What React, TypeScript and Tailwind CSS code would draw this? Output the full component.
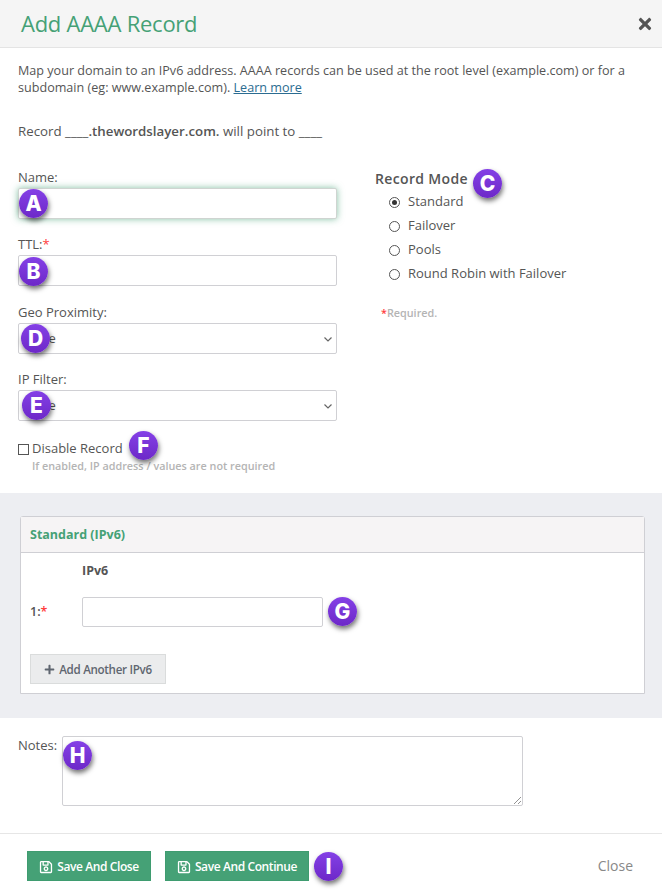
import { FaPlus, FaRegSave, FaTimes } from "react-icons/fa";

function Badge({ letter, className }: { letter: string; className: string }) {
  return (
    <span
      className={`absolute flex h-[29px] w-[29px] items-center justify-center rounded-full bg-gradient-to-b from-[#8440e6] to-[#6d28c8] text-[21px] font-extrabold leading-none text-white shadow-[1px_3px_5px_rgba(0,0,0,0.55)] [font-family:Inter,sans-serif] ${className}`}
    >
      {letter}
    </span>
  );
}

function Req() {
  return <span className="text-[#ff3b3b]">*</span>;
}

function Select() {
  return (
    <div className="relative h-[31px] w-[319px] rounded-[2px] border border-[#d0d0d4] bg-white">
      <span className="absolute left-[4px] top-[5px] text-[13px] text-[#555]">None</span>
      <svg className="absolute right-[3px] top-[11px]" width="10" height="8" viewBox="0 0 10 8" fill="none">
        <path d="M1.5 2.5L5 6l3.5-3.5" stroke="#666" strokeWidth="1.2" />
      </svg>
    </div>
  );
}

function Radio({ label, checked }: { label: string; checked?: boolean }) {
  return (
    <div className="flex h-[24px] items-center pl-[14px]">
      <span className="flex h-[11px] w-[11px] items-center justify-center rounded-full border border-[#555] bg-white">
        {checked && <span className="h-[5px] w-[5px] rounded-full bg-[#333]" />}
      </span>
      <span className="ml-[8px] text-[13px] text-[#555]">{label}</span>
    </div>
  );
}

function SaveButton({ label, width }: { label: string; width: string }) {
  return (
    <button className={`flex h-[30px] items-center justify-center gap-[4px] border border-[#3f9c70] bg-[#45a176] pt-[1px] text-[12px] font-semibold tracking-[-0.4px] text-white ${width}`}>
      <FaRegSave className="text-[14px]" />
      {label}
    </button>
  );
}

export default function App() {
  return (
    <div className="relative h-[896px] w-[662px] overflow-hidden bg-white text-[#555] [font-family:'Open_Sans',sans-serif]">
      <header className="flex h-[48px] items-center justify-between border-b border-[#e4e4e4] bg-[#f5f5f5] pl-[21px] pr-[8px]">
        <h1 className="text-[22px] tracking-[-0.25px] text-[#45a176]">Add AAAA Record</h1>
        <FaTimes className="text-[18px] text-[#555]" />
      </header>

      <section className="h-[445px] px-[18px] pt-[14px]">
        <p className="text-[12.6px] leading-[17px]">
          Map your domain to an IPv6 address. AAAA records can be used at the root level (example.com) or for a
          subdomain (eg: www.example.com).{" "}
          <a className="text-[#2b6c91] underline">Learn more</a>
        </p>
        <p className="mt-[26px] text-[13.3px] leading-[18px]">
          Record ____<b className="font-semibold">.thewordslayer.com.</b> will point to ____
        </p>

        <div className="mt-[28px] flex">
          <div className="w-[357px]">
            <label className="block h-[20px] text-[13px] leading-[18px]">Name:</label>
            <div className="relative h-[31px] w-[319px] rounded-[2px] border border-[#cfd4d1] bg-white shadow-[0_0_7px_rgba(69,161,118,0.65)]">
              <Badge letter="A" className="left-[0px] top-[0px]" />
            </div>
            <label className="mt-[16px] block h-[20px] text-[13px] leading-[19px]">
              TTL:<Req />
            </label>
            <div className="relative h-[31px] w-[319px] rounded-[2px] border border-[#d0d0d4] bg-white">
              <Badge letter="B" className="left-[0px] top-[1px]" />
            </div>
            <label className="mt-[17px] block h-[20px] text-[13px] leading-[18px]">Geo Proximity:</label>
            <div className="relative">
              <Select />
              <Badge letter="D" className="left-[3px] top-[1px]" />
            </div>
            <label className="mt-[16px] block h-[20px] text-[13px] leading-[18px]">IP Filter:</label>
            <div className="relative">
              <Select />
              <Badge letter="E" className="left-[4px] top-[1px]" />
            </div>
            <div className="relative mt-[19px] flex h-[18px] items-center">
              <span className="h-[11px] w-[11px] border border-[#555] bg-white" />
              <span className="ml-[3px] text-[13px]">Disable Record</span>
              <Badge letter="F" className="left-[111px] top-[-9px]" />
            </div>
            <p className="ml-[14px] text-[10.8px] font-semibold text-[#b4b4b4]">
              If enabled, IP address / values are not required
            </p>
          </div>

          <div className="relative mt-[1px]">
            <h2 className="h-[20px] text-[14px] font-semibold leading-[20px] tracking-[0.35px]">Record Mode</h2>
            <Badge letter="C" className="left-[98px] top-[0px]" />
            <div className="mt-[1px]">
              <Radio label="Standard" checked />
              <Radio label="Failover" />
              <Radio label="Pools" />
              <Radio label="Round Robin with Failover" />
            </div>
            <p className="ml-[6px] mt-[19px] text-[10.8px] font-semibold text-[#b4b4b4]">
              <Req />Required.
            </p>
          </div>
        </div>
      </section>

      <section className="h-[225px] bg-[#edeef2] px-[20px] pt-[23px]">
        <div className="h-[178px] w-[625px] rounded-t-[3px] border border-[#cfcfd4] bg-white">
          <div className="flex h-[36px] items-center border-b border-[#cfcfd4] bg-[#f6f4f5] pl-[9px] pt-[1px] text-[12.5px] font-bold text-[#45a176]">
            Standard (IPv6)
          </div>
          <div className="pl-[9px]">
            <div className="mt-[9px] pl-[52px] text-[12.5px] font-bold leading-[18px]">IPv6</div>
            <div className="relative mt-[17px] flex h-[30px] items-center">
              <span className="w-[52px] text-[12.5px] font-semibold">
                1:<Req />
              </span>
              <div className="h-[30px] w-[241px] rounded-[2px] border border-[#d0d0d4] bg-white" />
              <Badge letter="G" className="left-[298px] top-[0px]" />
            </div>
            <button className="mt-[27px] flex h-[30px] w-[136px] items-center justify-center gap-[4px] border border-[#dadcdc] bg-[#ebeced] pt-[1px] text-[11.6px] font-semibold tracking-[-0.3px] text-[#5f6670]">
              <FaPlus className="text-[11px]" />
              Add Another IPv6
            </button>
          </div>
        </div>
      </section>

      <section className="flex h-[116px] border-b border-[#e6e6e6] pl-[18px] pt-[18px]">
        <label className="w-[44px] text-[13px] leading-[18px]">Notes:</label>
        <div className="relative h-[70px] w-[461px] rounded-[2px] border border-[#d0d0d4] bg-white">
          <Badge letter="H" className="left-[0px] top-[4px]" />
          <svg className="absolute bottom-[1px] right-[1px]" width="8" height="8" viewBox="0 0 8 8" stroke="#777" strokeWidth="0.8">
            <path d="M1 8l7-7M5 8l3-3" />
          </svg>
        </div>
      </section>

      <footer className="relative flex items-center gap-[14px] pl-[27px] pr-[29px] pt-[17px]">
        <SaveButton label="Save And Close" width="w-[124px]" />
        <SaveButton label="Save And Continue" width="w-[144px]" />
        <Badge letter="I" className="left-[314px] top-[18px]" />
        <span className="ml-auto -translate-y-px text-[14px] text-[#888]">Close</span>
      </footer>
    </div>
  );
}
